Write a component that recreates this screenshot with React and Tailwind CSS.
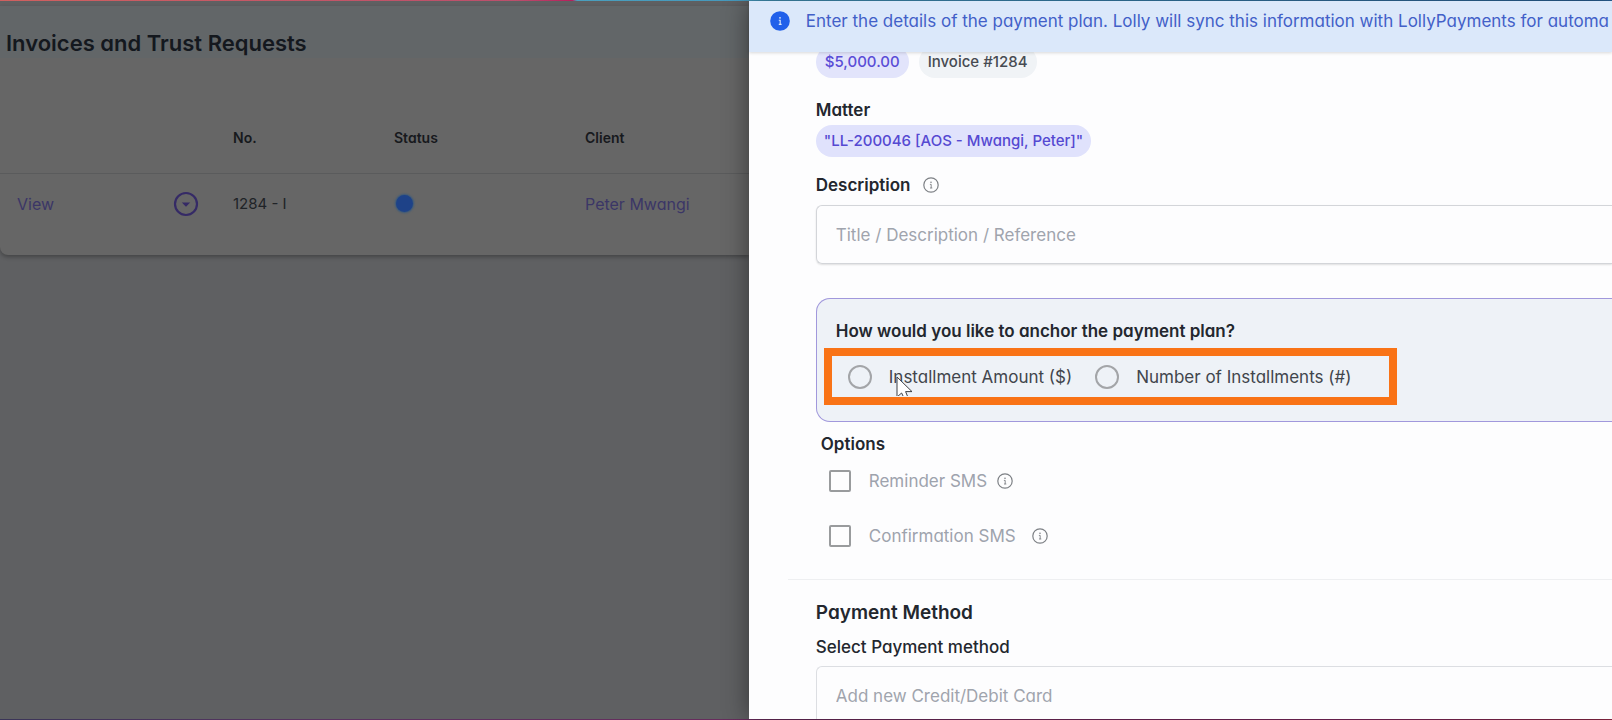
import { useId } from "react";

function InfoIcon({ className }) {
  return (
    <svg viewBox="0 0 16 16" className={className} fill="none" aria-hidden="true">
      <circle cx="8" cy="8" r="7.2" stroke="currentColor" strokeWidth="1.2" />
      <circle cx="8" cy="5.2" r="0.8" fill="currentColor" />
      <path d="M6.9 7.4H8.2V11M7 11H9.3" stroke="currentColor" strokeWidth="0.9" />
    </svg>
  );
}

function InvoiceTable() {
  return (
    <section className="mt-1 flex h-[249px] flex-col rounded-bl-lg bg-[#666666] shadow-[0_2px_4px_rgba(0,0,0,0.3)]">
      <div className="flex h-[52px] items-end bg-[#626668] pl-1.5">
        <h1 className="mb-px text-[22px] leading-7 font-semibold whitespace-nowrap text-[#14181e]">
          Invoices and Trust Requests
        </h1>
      </div>
      <table className="mt-6 w-full table-fixed text-left text-[15px]">
        <colgroup>
          <col className="w-[173px]" />
          <col className="w-[60px]" />
          <col className="w-[161px]" />
          <col className="w-[191px]" />
          <col />
        </colgroup>
        <thead>
          <tr className="h-[91px] border-b border-[#5a5b5c] text-sm text-[#17191d]">
            <th></th>
            <th></th>
            <th className="pt-[22px] font-semibold">No.</th>
            <th className="pt-[22px] font-semibold">Status</th>
            <th className="pt-[22px] font-semibold">Client</th>
          </tr>
        </thead>
        <tbody>
          <tr className="h-[61px] text-[#202327]">
            <td className="pl-[17px]">
              <a href="#view" className="text-base text-[#3b3666]">View</a>
            </td>
            <td>
              <button type="button" aria-label="Row actions" className="block">
                <svg viewBox="0 0 26 26" className="size-[26px]" fill="none">
                  <circle cx="13" cy="13" r="11" stroke="#352a66" strokeWidth="2.2" />
                  <path d="M8.8 11.6H17.2L13 15.8Z" fill="#352a66" />
                </svg>
              </button>
            </td>
            <td>1284 - I</td>
            <td>
              <span className="ml-0.5 block size-[17px] rounded-full bg-[#1e4288] shadow-[0_0_2px_1px_#34587f]" />
            </td>
            <td>
              <a href="#client" className="text-base whitespace-nowrap text-[#3b3666]">Peter Mwangi</a>
            </td>
          </tr>
        </tbody>
      </table>
    </section>
  );
}

function RadioOption({ label }) {
  return (
    <label className="flex items-center gap-[17px]">
      <input
        type="radio"
        name="anchor"
        className="size-6 shrink-0 appearance-none rounded-full border-2 border-[#a3a5a8] checked:border-[6px] checked:border-indigo-600"
      />
      {label}
    </label>
  );
}

function CheckOption({ label, gap }) {
  const id = useId();
  return (
    <div className="flex h-[22px] items-center">
      <input
        id={id}
        type="checkbox"
        className="size-[22px] shrink-0 appearance-none rounded-xs border-2 border-[#999b9d] checked:bg-indigo-600"
      />
      <label htmlFor={id} className={`pl-[18px] text-[#9ea3ad] ${gap}`}>
        {label}
      </label>
      <InfoIcon className="size-4 text-[#7d8085]" />
    </div>
  );
}

function Cursor() {
  return (
    <svg viewBox="0 0 18 20" className="absolute top-5 left-16 h-5 w-[18px]" aria-hidden="true">
      <path d="M1 1V21L5.6 17L9 24L12.4 22.4L9.6 15.6H16Z" fill="#fff" stroke="#3c3f44" strokeWidth="1" />
    </svg>
  );
}

export default function App() {
  return (
    <div className="flex h-screen flex-col overflow-hidden bg-[#fdfdfe] font-['Inter',sans-serif] text-base [font-feature-settings:'cv11']">
      <div className="h-px shrink-0 bg-[linear-gradient(90deg,#d0605f,#bb4f6c_32%,#b81f5c_35.5%,#4a9fbe_35.8%,#3f8fbb_60%,#2b649b)]" />
      <div className="flex min-h-0 flex-1">
        <main className="w-[46.45%] shrink-0 overflow-hidden bg-[#5f6062] pt-px">
          <InvoiceTable />
        </main>

        <aside className="relative flex min-w-0 flex-1 flex-col bg-[#fdfdfe] shadow-[0_0_24px_rgba(0,0,0,0.45)]">
          <div className="z-10 flex h-[51px] shrink-0 items-start gap-4 overflow-hidden bg-[#dbe8fa] pt-1.5 pl-[21px] shadow-[0_1px_3px_rgba(0,0,0,0.15)]">
            <svg viewBox="0 0 20 20" className="mt-1 size-5 shrink-0" aria-hidden="true">
              <circle cx="10" cy="10" r="9.8" fill="#2160ea" />
              <circle cx="10" cy="6.8" r="0.9" fill="#dbe8fa" />
              <path d="M8.8 9.2H10.2V13.4M8.8 13.4H11.6" stroke="#dbe8fa" strokeWidth="1.1" fill="none" />
            </svg>
            <p className="text-[17px] leading-7 whitespace-nowrap text-[#4260c8]">
              Enter the details of the payment plan. Lolly will sync this information with LollyPayments for automa
            </p>
          </div>

          <form className="flex min-h-0 flex-1 flex-col overflow-hidden text-[17px] leading-6 text-[#23272e]">
            <div className="-mt-1.5 flex shrink-0 flex-col pl-[67px]">
              <div className="flex gap-2.5 text-[15px] font-medium">
                <span className="flex h-8 items-center rounded-full bg-[#e2e4fb] px-[9px] text-[#5a4dd6]">$5,000.00</span>
                <span className="flex h-8 items-center rounded-full bg-[#f0f3f6] px-[9px] text-[#474b52]">Invoice #1284</span>
              </div>

              <h2 className="mt-5 font-semibold">Matter</h2>
              <div className="mt-[3px] flex text-[15px] font-medium">
                <span className="flex h-8 items-center rounded-full bg-[#e0e2fc] px-2 text-[#5549d2]">
                  "LL-200046 [AOS - Mwangi, Peter]"
                </span>
              </div>

              <div className="mt-4 flex items-center gap-3">
                <label htmlFor="description" className="font-semibold">Description</label>
                <InfoIcon className="size-4 text-[#7d8085]" />
              </div>
              <input
                id="description"
                type="text"
                placeholder="Title / Description / Reference"
                className="mt-2 h-[59px] rounded-l-md border border-r-0 border-[#d3d5d9] pl-[19px] shadow-[0_1px_2px_rgba(0,0,0,0.12)] placeholder:text-[#a0a4ad]"
              />

              <fieldset className="mt-[34px] h-[124px] rounded-l-[14px] border border-r-0 border-[#a198dc] bg-[#eef2f7] pt-5">
                <legend className="float-left w-full pl-[19px] font-semibold">
                  How would you like to anchor the payment plan?
                </legend>
                <div className="clear-both pt-[5px] pl-[7px]">
                  <div className="relative flex h-[57px] w-[573px] items-center gap-[23px] overflow-hidden border-8 border-[#f97316] pl-4 whitespace-nowrap text-[#41454c]">
                    <RadioOption label="Installment Amount ($)" />
                    <RadioOption label="Number of Installments (#)" />
                    <Cursor />
                  </div>
                </div>
              </fieldset>

              <h2 className="mt-2.5 pl-[5px] font-semibold">Options</h2>
              <div className="mt-3.5 flex flex-col gap-[33px] pl-[13px]">
                <CheckOption label="Reminder SMS" gap="pr-2.5" />
                <CheckOption label="Confirmation SMS" gap="pr-4" />
              </div>
            </div>

            <hr className="mt-8 ml-[39px] shrink-0 border-[#eeeff1]" />

            <div className="flex shrink-0 flex-col pl-[67px]">
              <h2 className="mt-[21px] text-[19px] leading-6 font-semibold">Payment Method</h2>
              <label htmlFor="method" className="mt-2.5 font-medium">Select Payment method</label>
              <select
                id="method"
                className="mt-[7px] h-[59px] appearance-none rounded-l-md border border-r-0 border-[#dcdee2] pl-[19px] text-[#a0a4ad]"
              >
                <option>Add new Credit/Debit Card</option>
              </select>
            </div>
          </form>
        </aside>
      </div>
      <div className="h-px shrink-0 bg-[linear-gradient(90deg,#3a3558,#5a3460_20%,#6b2a5c_50%,#82275f_85%,#8f2746)]" />
    </div>
  );
}
